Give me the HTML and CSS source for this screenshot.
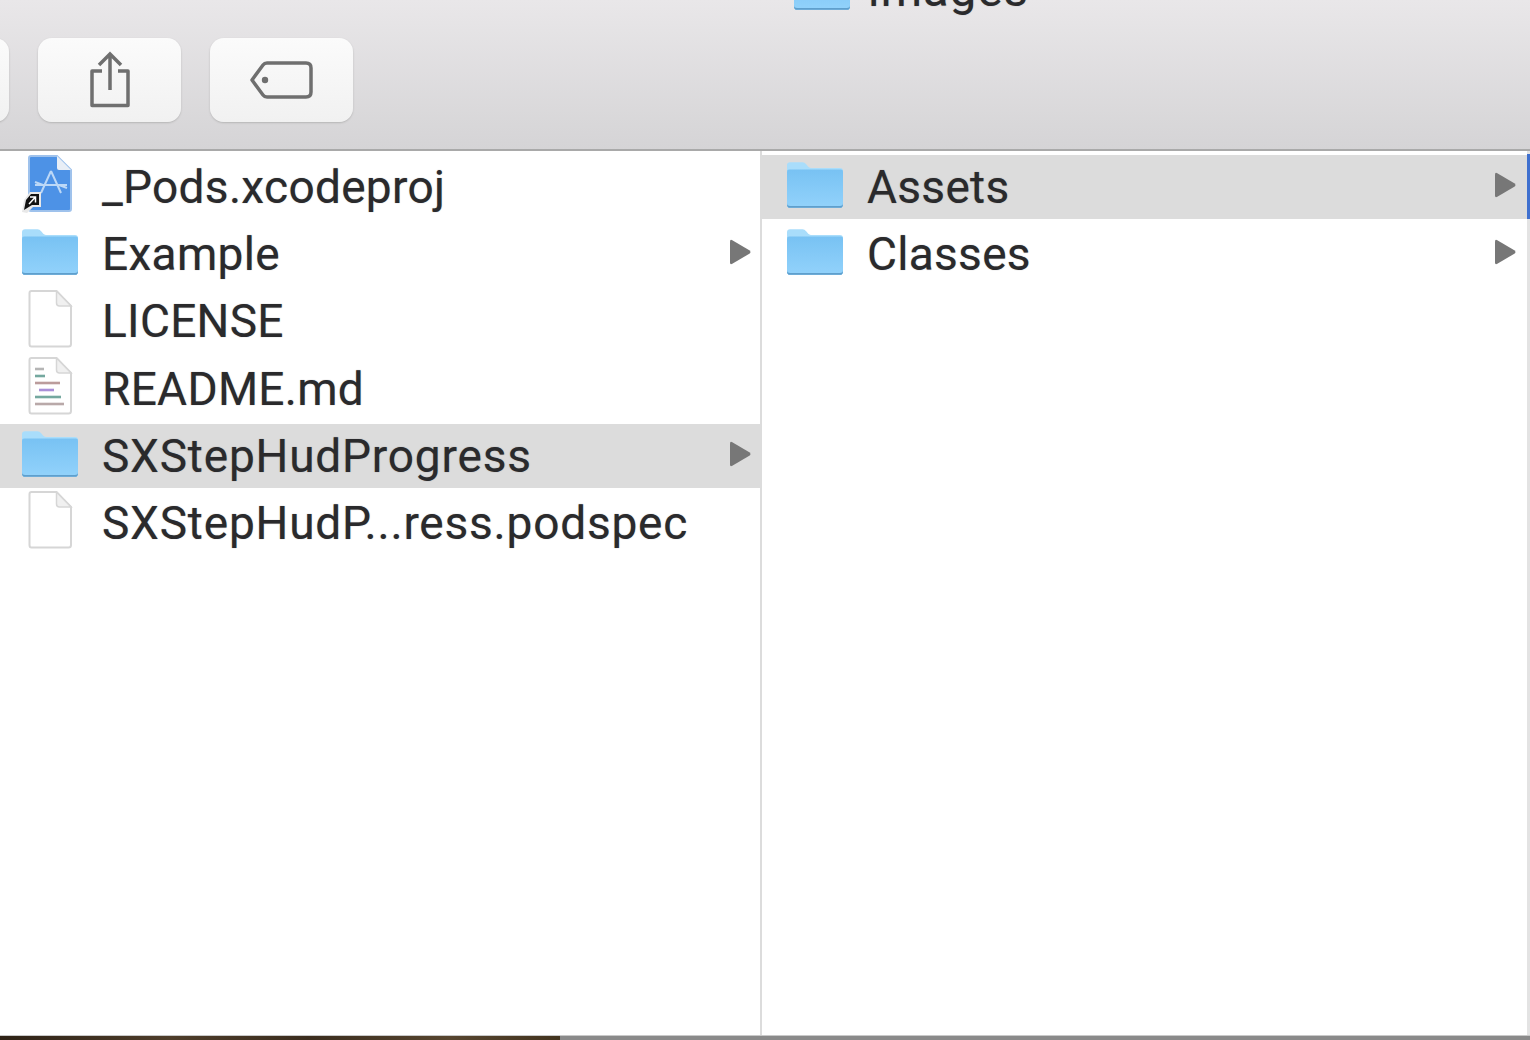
FILE: index.html
```html
<!DOCTYPE html>
<html lang="en">
  <head>
    <meta charset="UTF-8" />
    <meta name="viewport" content="width=device-width, initial-scale=1.0" />
    <link rel="stylesheet" href="styles.css">
    <title>SXStepHudProgress</title>
  </head>
  <body>
    <svg class="defs" width="0" height="0">
      <defs>
        <linearGradient id="folderBody" x1="0" y1="0" x2="0" y2="1">
          <stop offset="0" stop-color="#78c2f3" />
          <stop offset="1" stop-color="#92d2fb" />
        </linearGradient>
        <symbol id="folder" viewBox="1 1 54 44">
          <path d="M1 42V4q0-3 3-3h12q2 0 3.500 2l2 2.500q1 1 2.500 1H52q3 0 3 3V42q0 3-3 3H4q-3 0-3-3z" fill="#a9ddfb" />
          <path d="M1 42V10q0-2 2-2h50q2 0 2 2v32q0 3-3 3H4q-3 0-3-3z" fill="url(#folderBody)" />
          <path d="M1 41.500q0 3.500 3 3.500h48q3 0 3-3.500v-.8q0 2.500-3 2.500H4q-3 0-3-2.500z" fill="#5f9fcc" />
        </symbol>
        <symbol id="file" viewBox="0 0 46 58">
          <path d="M2.500 3q0-2 2-2h25L44 16v38q0 2.500-2.500 2.500h-37q-2 0-2-2.500z" fill="#fff" stroke="#d6d6d6" stroke-width="2" />
          <path d="M29.500 1v12q0 3 3 3H44z" fill="#f0f0f0" stroke="#d6d6d6" stroke-width="1.500" />
        </symbol>
        <symbol id="arrow" viewBox="0 0 24 28">
          <path d="M2 3.500q0-2.500 2.300-1.300l17 10q2.400 1.800 0 3.600l-17 10Q2 27 2 24.500z" fill="#777" />
        </symbol>
      </defs>
    </svg>

    <div class="window">
      <div class="toolbar">
        <div class="parent">
          <svg class="parent-icon"><use href="#folder" /></svg>
          <span class="parent-name">images</span>
        </div>
        <div class="buttons">
          <div class="btn btn-cut"></div>
          <div class="btn">
            <svg class="btn-icon" width="44" height="58" viewBox="0 0 44 58" fill="none" stroke="#6f6f6f" stroke-width="3.500">
              <path d="M14 20H4v34.500h36V20H30" stroke-linejoin="round" />
              <path d="M22 39V3M11 14 22 3l11 11" />
            </svg>
          </div>
          <div class="btn">
            <svg class="btn-icon" width="64" height="38" viewBox="0 0 64 38" fill="none" stroke="#6f6f6f" stroke-width="3.500">
              <path d="M2 19 13 4q1.500-2 4-2h39q5 0 5 5v24q0 5-5 5H17q-2.500 0-4-2z" stroke-linejoin="round" />
              <circle cx="15" cy="19" r="3.200" fill="#6f6f6f" stroke="none" />
            </svg>
          </div>
        </div>
      </div>

      <div class="browser">
        <div class="col col-left">
          <div class="item">
            <span class="icon">
              <svg class="proj" width="56" height="58" viewBox="0 0 56 58">
                <path d="M7 3q0-2 2-2h26l14 14v39q0 2-2 2H9q-2 0-2-2z" fill="#4d92e6" stroke="#9fc2ec" stroke-width="2" />
                <path d="M35 1v12q0 2 2 2h12z" fill="#e8eef6" />
                <path d="M29 16 19 38M29 16l10 22M13 30h32M21 30l-8-3M37 30l8 3" fill="none" stroke="#bcd8f7" stroke-width="2" />
                <path d="M0 57 2 45l6-8h11v15h-8l-6 6z" fill="#e8e8e8" />
                <path d="M2 55 4 45l5-6h8v11h-7z" fill="#111" />
                <path d="M7 49l6-6.500M8 42h5.500v5.500" fill="none" stroke="#fff" stroke-width="1.500" />
              </svg>
            </span>
            <span class="name">_Pods.xcodeproj</span>
          </div>
          <div class="item">
            <span class="icon"><svg class="folder"><use href="#folder" /></svg></span>
            <span class="name">Example</span>
            <svg class="arrow"><use href="#arrow" /></svg>
          </div>
          <div class="item">
            <span class="icon"><svg class="file"><use href="#file" /></svg></span>
            <span class="name">LICENSE</span>
          </div>
          <div class="item">
            <span class="icon">
              <svg class="file" viewBox="0 0 46 58">
                <use href="#file" width="46" height="58" />
                <g fill="none" stroke-width="2.600">
                  <path d="M8 12h9" stroke="#b5b5b5" />
                  <path d="M8 19h10" stroke="#74a89f" />
                  <path d="M8 26h25" stroke="#bb9c9c" />
                  <path d="M12 33h15" stroke="#a98fd8" />
                  <path d="M8 40h26" stroke="#74a89f" />
                  <path d="M8 47h29" stroke="#b9a9a9" />
                </g>
              </svg>
            </span>
            <span class="name">README.md</span>
          </div>
          <div class="item selected">
            <span class="icon"><svg class="folder"><use href="#folder" /></svg></span>
            <span class="name name-wide">SXStepHudProgress</span>
            <svg class="arrow"><use href="#arrow" /></svg>
          </div>
          <div class="item">
            <span class="icon"><svg class="file"><use href="#file" /></svg></span>
            <span class="name name-wide">SXStepHudP...ress.podspec</span>
          </div>
        </div>

        <div class="col col-right">
          <div class="item selected">
            <span class="icon"><svg class="folder"><use href="#folder" /></svg></span>
            <span class="name">Assets</span>
            <svg class="arrow"><use href="#arrow" /></svg>
          </div>
          <div class="item">
            <span class="icon"><svg class="folder"><use href="#folder" /></svg></span>
            <span class="name">Classes</span>
            <svg class="arrow"><use href="#arrow" /></svg>
          </div>
        </div>
      </div>

      <div class="bottom">
        <div class="desktop"></div>
        <div class="behind"></div>
      </div>
    </div>
  </body>
</html>
```

FILE: styles.css
```css
html,
body {
  margin: 0;
  height: 100%;
  overflow: hidden;
  background: #fff;
}
body {
  font-family: Roboto, "Liberation Sans", sans-serif;
  color: #2a2a2c;
}
.defs {
  display: block;
  height: 0;
}
.window {
  display: flex;
  flex-direction: column;
  height: 1040px;
}

/* toolbar */
.toolbar {
  height: 149px;
  flex: none;
  overflow: hidden;
  background: linear-gradient(#e9e7e9, #d5d4d6);
  border-bottom: 2px solid #a9a9a9;
}
.parent {
  display: flex;
  align-items: flex-end;
  height: 14px;
  margin-top: -1px;
  padding-left: 794px;
}
.parent-icon {
  width: 56px;
  height: 46px;
  flex: none;
  margin-bottom: 3px;
  filter: blur(0.5px);
}
.parent-name {
  margin-left: 18px;
  margin-bottom: 12px;
  font-size: 47px;
  letter-spacing: 1.2px;
  line-height: 22px;
  text-shadow: 0 0 1px rgba(40, 40, 44, 0.5);
}
.buttons {
  display: flex;
  gap: 29px;
  margin-top: 25px;
  margin-left: -134px;
}
.btn {
  width: 143px;
  height: 84px;
  display: flex;
  align-items: center;
  justify-content: center;
  border-radius: 14px;
  background: linear-gradient(#fbfbfb, #f1f1f1);
  box-shadow: 0 1px 2px #b5b5b5;
}
.btn-icon {
  filter: blur(0.5px);
}

/* columns */
.browser {
  flex: 1;
  display: flex;
  min-height: 0;
}
.col {
  padding-top: 4px;
}
.col-left {
  width: 760px;
  flex: none;
  border-right: 2px solid #dcdcdc;
}
.col-right {
  flex: 1;
  border-right: 3px solid #e3e3e3;
}
.item {
  display: flex;
  align-items: center;
  height: 64px;
  margin-bottom: 3.2px;
  padding-left: 18px;
  padding-right: 8px;
}
.col-right .item {
  padding-left: 21px;
  padding-right: 10px;
}
.icon {
  width: 64px;
  height: 64px;
  flex: none;
  display: flex;
  align-items: center;
  justify-content: center;
  filter: blur(0.5px);
}
.folder {
  width: 56px;
  height: 46px;
  margin-bottom: 4px;
}
.file {
  width: 46px;
  height: 58px;
  margin-bottom: 5px;
}
.proj {
  flex: none;
  margin-bottom: 6px;
}
.name {
  flex: 1;
  padding-left: 20px;
  font-size: 46px;
  letter-spacing: 0.3px;
  white-space: nowrap;
  text-shadow: 0 0 1px rgba(40, 40, 44, 0.5);
}
.name-wide {
  letter-spacing: 0.8px;
}
.arrow {
  width: 24px;
  height: 28px;
  flex: none;
  margin-bottom: 4px;
  filter: blur(0.4px);
}
.selected {
  background: #dcdcdc;
}
.col-right .selected {
  position: relative;
}
.col-right .selected::after {
  content: "";
  position: absolute;
  top: -1px;
  bottom: 0;
  right: -3px;
  width: 3px;
  background: #3f70cf;
}

/* strip of whatever is behind the window */
.bottom {
  height: 4px;
  flex: none;
  display: flex;
  border-top: 1px solid #c9c9c9;
}
.desktop {
  width: 560px;
  background: linear-gradient(90deg, #2e2216, #4e3d2a 30%, #3b2d1e 55%, #57452f 80%, #43341f);
}
.behind {
  flex: 1;
  background: #8a8a8a;
}
```
